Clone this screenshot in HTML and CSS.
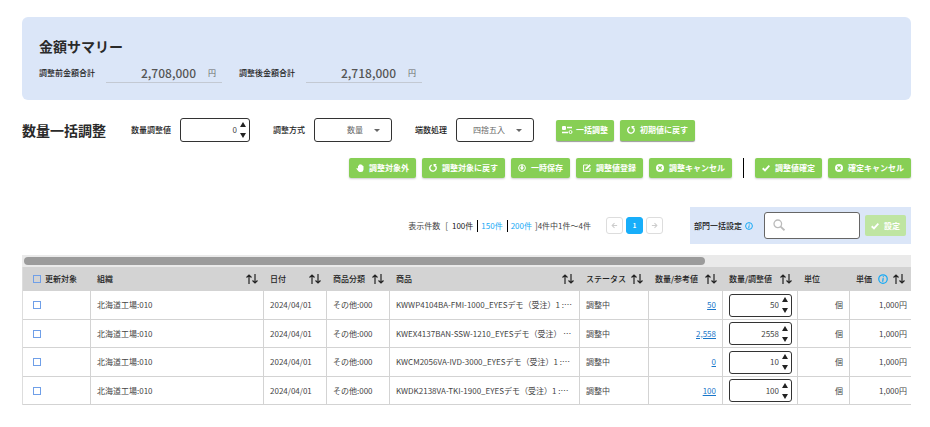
FILE: index.html
```html
<!DOCTYPE html>
<html lang="ja">
<head>
<meta charset="utf-8">
<meta name="viewport" content="width=device-width, initial-scale=1">
<title>数量一括調整</title>
<link rel="stylesheet" href="styles.css">
</head>
<body>
<svg class="sprite" aria-hidden="true">
  <symbol id="up" viewBox="0 0 6 5"><path d="M3 0L6 5H0Z"/></symbol>
  <symbol id="down" viewBox="0 0 6 5"><path d="M0 0H6L3 5Z"/></symbol>
  <symbol id="caret" viewBox="0 0 6 3"><path d="M0 0H6L3 3Z"/></symbol>
  <symbol id="sort" viewBox="0 0 12 10"><path d="M3 10V1M.5 3.500L3 1l2.500 2.500M9 0v9M6.500 6.500L9 9l2.500-2.500" fill="none" stroke="currentColor" stroke-width="1.200"/></symbol>
  <symbol id="hand" viewBox="0 0 8 8"><path d="M2 4.800V1.700Q2.500 1.100 3 1.700V.8Q3.600.2 4.200.8V.5Q4.800 0 5.400.6V1Q6 .5 6.500 1.200V2Q7.200 1.600 7.500 2.300V5.500Q7.300 8 5 8H4Q2.800 8 2.200 7L.4 4.700Q.5 3.700 1.300 4Z"/></symbol>
  <symbol id="redo" viewBox="0 0 8 8"><path d="M2.700 1.100A3.200 3.200 0 1 0 6.300 1.800" fill="none" stroke="currentColor" stroke-width="1.400"/><path d="M4.400.1H7.700L5 3.200Z"/></symbol>
  <symbol id="save" viewBox="0 0 8 8"><circle cx="4" cy="4" r="3.400" fill="none" stroke="currentColor"/><path d="M3.200 1.200H4.800V3.600H6.200L4 6.200 1.800 3.600H3.200Z"/></symbol>
  <symbol id="edit" viewBox="0 0 8 8"><path d="M5 1H.6V7.400H7V4" fill="none" stroke="currentColor"/><path d="M2.300 5.800L2.700 4 6.500.2 7.900 1.500 4 5.300Z"/></symbol>
  <symbol id="cancel" viewBox="0 0 8 8"><path fill-rule="evenodd" d="M4 0a4 4 0 1 1 0 8a4 4 0 1 1 0-8ZM2.800 1.900L1.900 2.800 3.100 4 1.900 5.200 2.800 6.100 4 4.900 5.200 6.100 6.100 5.200 4.900 4 6.100 2.800 5.200 1.900 4 3.100Z"/></symbol>
  <symbol id="check" viewBox="0 0 8 8"><path d="M.7 4.200L3 6.400 7.400 1.600" fill="none" stroke="currentColor" stroke-width="1.900"/></symbol>
  <symbol id="tune" viewBox="0 0 11 8"><path d="M5 1.500H10M0 6.500H6" fill="none" stroke="currentColor" stroke-width="1.300"/><rect width="4" height="4" rx="1"/><circle cx="8.500" cy="6" r="1.500" fill="none" stroke="currentColor"/></symbol>
  <symbol id="info" viewBox="0 0 8 8"><circle cx="4" cy="4" r="3.400" fill="none" stroke="currentColor"/><path d="M4.300 1.700V2.600M4.200 3.300L3.700 6.200" fill="none" stroke="currentColor"/></symbol>
  <symbol id="search" viewBox="0 0 12 12"><circle cx="4.800" cy="4.800" r="3.800" fill="none" stroke="currentColor" stroke-width="1.300"/><path d="M7.600 7.600L11.500 11.300" stroke="currentColor" stroke-width="1.800"/></symbol>
  <symbol id="left" viewBox="0 0 8 8"><path d="M7 4H1.500M4 1.300L1.300 4 4 6.700" fill="none" stroke="currentColor" stroke-width="1.200"/></symbol>
  <symbol id="right" viewBox="0 0 8 8"><path d="M1 4H6.500M4 1.300L6.700 4 4 6.700" fill="none" stroke="currentColor" stroke-width="1.200"/></symbol>
</svg>
<main class="page">
  <section class="summary">
    <h2 class="title">金額サマリー</h2>
    <dl class="totals">
      <div class="total"><dt class="label">調整前金額合計</dt><dd class="amount"><strong>2,708,000</strong><span>円</span></dd></div>
      <div class="total"><dt class="label">調整後金額合計</dt><dd class="amount"><strong>2,718,000</strong><span>円</span></dd></div>
    </dl>
  </section>

  <section class="adjust">
    <h2 class="title">数量一括調整</h2>
    <div class="fields">
      <div class="field">
        <label class="label" for="qty">数量調整値</label>
        <div class="stepper"><input id="qty" type="text" inputmode="numeric" value="0"><span class="steps"><button type="button" aria-label="増やす"><svg><use href="#up"/></svg></button><button type="button" aria-label="減らす"><svg><use href="#down"/></svg></button></span></div>
      </div>
      <div class="field">
        <label class="label" for="method">調整方式</label>
        <div class="picker"><select id="method"><option>数量</option></select><svg><use href="#caret"/></svg></div>
      </div>
      <div class="field">
        <label class="label" for="rounding">端数処理</label>
        <div class="picker"><select id="rounding"><option>四捨五入</option></select><svg><use href="#caret"/></svg></div>
      </div>
    </div>
    <div class="group">
      <button type="button" class="btn btn-raised btn-wide-icon"><svg><use href="#tune"/></svg>一括調整</button>
      <button type="button" class="btn btn-raised"><svg><use href="#redo"/></svg>初期値に戻す</button>
    </div>
  </section>

  <div class="actions">
    <div class="group">
      <button type="button" class="btn"><svg><use href="#hand"/></svg>調整対象外</button>
      <button type="button" class="btn"><svg><use href="#redo"/></svg>調整対象に戻す</button>
      <button type="button" class="btn"><svg><use href="#save"/></svg>一時保存</button>
      <button type="button" class="btn"><svg><use href="#edit"/></svg>調整値登録</button>
      <button type="button" class="btn"><svg><use href="#cancel"/></svg>調整キャンセル</button>
    </div>
    <div class="group group-final">
      <button type="button" class="btn"><svg><use href="#check"/></svg>調整値確定</button>
      <button type="button" class="btn"><svg><use href="#cancel"/></svg>確定キャンセル</button>
    </div>
  </div>

  <div class="listbar">
    <div class="count">
      <span>表示件数</span><span class="open">[</span>
      <ul class="sizes"><li>100件</li><li><a href="#">150件</a></li><li><a href="#">200件</a></li></ul>
      <span>]4件中1件～4件</span>
    </div>
    <nav class="pager" aria-label="ページ">
      <button type="button" aria-label="前へ"><svg><use href="#left"/></svg></button>
      <button type="button" class="current">1</button>
      <button type="button" aria-label="次へ"><svg><use href="#right"/></svg></button>
    </nav>
    <div class="dept">
      <label class="label" for="dept">部門一括設定</label>
      <svg class="info"><use href="#info"/></svg>
      <div class="search"><svg><use href="#search"/></svg><input id="dept" type="search"></div>
      <button type="button" class="btn btn-raised" disabled><svg><use href="#check"/></svg>設定</button>
    </div>
  </div>

  <div class="grid">
    <div class="track"><div class="thumb"></div></div>
    <table>
      <colgroup><col class="w-check"><col class="w-org"><col class="w-date"><col class="w-date"><col><col class="w-status"><col class="w-ref"><col class="w-qty"><col class="w-unit"><col class="w-price"></colgroup>
      <thead>
        <tr>
          <th class="pick"><label><input type="checkbox">更新対象</label></th>
          <th><div class="head">組織<svg><use href="#sort"/></svg></div></th>
          <th><div class="head">日付<svg><use href="#sort"/></svg></div></th>
          <th><div class="head">商品分類<svg><use href="#sort"/></svg></div></th>
          <th><div class="head">商品<svg><use href="#sort"/></svg></div></th>
          <th><div class="head">ステータス<svg><use href="#sort"/></svg></div></th>
          <th><div class="head">数量/参考値<svg><use href="#sort"/></svg></div></th>
          <th><div class="head">数量/調整値<svg><use href="#sort"/></svg></div></th>
          <th>単位</th>
          <th><div class="head">単価<svg class="info info-large"><use href="#info"/></svg><svg><use href="#sort"/></svg></div></th>
        </tr>
      </thead>
      <tbody>
        <tr>
          <td class="pick"><input type="checkbox" aria-label="1行目を選択"></td><td>北海道工場:010</td><td>2024/04/01</td><td>その他:000</td><td>KWWP4104BA-FMI-1000_EYESデモ（受注）1 :…</td><td>調整中</td><td class="num"><a href="#">50</a></td>
          <td class="edit"><div class="stepper"><input type="text" inputmode="numeric" aria-label="調整値" value="50"><span class="steps"><button type="button" aria-label="増やす"><svg><use href="#up"/></svg></button><button type="button" aria-label="減らす"><svg><use href="#down"/></svg></button></span></div></td>
          <td class="num">個</td><td class="num price">1,000円</td>
        </tr>
        <tr>
          <td class="pick"><input type="checkbox" aria-label="2行目を選択"></td><td>北海道工場:010</td><td>2024/04/01</td><td>その他:000</td><td>KWEX4137BAN-SSW-1210_EYESデモ（受注） …</td><td>調整中</td><td class="num"><a href="#">2,558</a></td>
          <td class="edit"><div class="stepper"><input type="text" inputmode="numeric" aria-label="調整値" value="2558"><span class="steps"><button type="button" aria-label="増やす"><svg><use href="#up"/></svg></button><button type="button" aria-label="減らす"><svg><use href="#down"/></svg></button></span></div></td>
          <td class="num">個</td><td class="num price">1,000円</td>
        </tr>
        <tr>
          <td class="pick"><input type="checkbox" aria-label="3行目を選択"></td><td>北海道工場:010</td><td>2024/04/01</td><td>その他:000</td><td>KWCM2056VA-IVD-3000_EYESデモ（受注）1 :…</td><td>調整中</td><td class="num"><a href="#">0</a></td>
          <td class="edit"><div class="stepper"><input type="text" inputmode="numeric" aria-label="調整値" value="10"><span class="steps"><button type="button" aria-label="増やす"><svg><use href="#up"/></svg></button><button type="button" aria-label="減らす"><svg><use href="#down"/></svg></button></span></div></td>
          <td class="num">個</td><td class="num price">1,000円</td>
        </tr>
        <tr>
          <td class="pick"><input type="checkbox" aria-label="4行目を選択"></td><td>北海道工場:010</td><td>2024/04/01</td><td>その他:000</td><td>KWDK2138VA-TKI-1900_EYESデモ（受注）1 :…</td><td>調整中</td><td class="num"><a href="#">100</a></td>
          <td class="edit"><div class="stepper"><input type="text" inputmode="numeric" aria-label="調整値" value="100"><span class="steps"><button type="button" aria-label="増やす"><svg><use href="#up"/></svg></button><button type="button" aria-label="減らす"><svg><use href="#down"/></svg></button></span></div></td>
          <td class="num">個</td><td class="num price">1,000円</td>
        </tr>
      </tbody>
    </table>
  </div>
</main>
</body>
</html>
```
FILE: styles.css
```css
* { box-sizing: border-box; }

body {
  margin: 0;
  background: #fff;
  color: #444;
  font: 8px/12px "Noto Sans CJK JP", sans-serif;
}

button, input, select { font: inherit; color: inherit; margin: 0; padding: 0; }
button { border: 0; background: none; cursor: pointer; }
svg { display: block; flex: none; fill: currentColor; }
.sprite { display: none; }

.page { padding: 17px 19px 20px 22px; }
.title { margin: 0; font-size: 14px; line-height: 18px; font-weight: 700; color: #2a2a2a; white-space: nowrap; }
.label { font-weight: 500; color: #222; white-space: nowrap; }

/* Summary */
.summary { padding: 20px 17px 17px; border-radius: 6px; background: #dbe6f8; }
.totals { display: flex; gap: 17px; margin: 8px 0 0; }
.total { display: flex; align-items: center; gap: 11px; }
.amount {
  display: flex;
  align-items: center;
  justify-content: flex-end;
  gap: 12px;
  width: 116px;
  height: 20px;
  margin: 0;
  padding-right: 6px;
  border-bottom: 1px solid #c3c9d3;
  color: #666;
}
.amount strong { color: #555; font-size: 12px; font-weight: 500; }

/* Adjustment controls */
.adjust { display: flex; align-items: center; margin-top: 18px; }
.fields { display: flex; gap: 23px; margin: 0 22px 0 25px; }
.field { display: flex; align-items: center; gap: 9px; }

.stepper {
  display: flex;
  align-items: center;
  width: 70px;
  height: 24px;
  padding-right: 3px;
  border: 1px solid #333;
  border-radius: 3px;
  background: #fff;
}
.stepper input { flex: 1; min-width: 0; border: 0; outline: 0; background: none; text-align: right; }
.steps { display: flex; flex-direction: column; gap: 6px; margin-left: 3px; color: #222; }
.steps svg { width: 6px; height: 5px; }

.picker { position: relative; width: 78px; }
.picker select {
  display: block;
  width: 100%;
  height: 24px;
  padding-right: 28px;
  border: 1px solid #333;
  border-radius: 3px;
  background: #fff;
  color: #666;
  appearance: none;
  text-align-last: right;
}
.picker svg { position: absolute; top: 11px; right: 12px; width: 6px; height: 3px; color: #666; pointer-events: none; }

/* Buttons */
.group { display: flex; gap: 6px; }
.btn {
  display: flex;
  align-items: center;
  gap: 5px;
  height: 20px;
  padding: 0 7px;
  border-radius: 2px;
  background: #87cf55;
  box-shadow: 0 1px 2px #ccc;
  color: #fff;
  font-weight: 700;
  white-space: nowrap;
}
.btn svg { width: 8px; height: 8px; }
.btn-raised { height: 21px; }
.adjust .btn-raised { box-shadow: 0 1px 1px #999; }
.btn-wide-icon { gap: 3px; padding: 0 6px; }
.btn-wide-icon svg { width: 11px; }
.btn:disabled { padding: 0 6px; background: #bfe5a2; box-shadow: none; }

.actions { display: flex; justify-content: flex-end; margin-top: 16px; }
.group-final { margin-left: 11px; padding-left: 11px; border-left: 1px solid #000; }

/* List toolbar */
.listbar { display: flex; align-items: center; justify-content: flex-end; margin-top: 29px; white-space: nowrap; }
.count { display: flex; align-items: center; }
.open { margin: 0 4px 0 5px; }
.sizes { display: flex; margin: 0 3px 0 0; padding: 0; list-style: none; color: #222; }
.sizes li + li { margin-left: 4px; padding-left: 3px; border-left: 1px solid #000; }
.sizes a { color: #16a9f5; text-decoration: none; }
.pager { display: flex; gap: 3px; margin: 0 27px 0 15px; }
.pager button {
  display: grid;
  place-items: center;
  width: 17px;
  height: 17px;
  border: 1px solid #ddd;
  border-radius: 3px;
  color: #ccc;
}
.pager svg { width: 7px; height: 7px; }
.pager .current { border-color: #18aefa; background: #18aefa; color: #fff; font-size: 6px; font-weight: 700; }

.dept { display: flex; align-items: center; height: 37px; padding: 0 5px 0 4px; background: #dbe6f8; }
.info { width: 8px; height: 8px; color: #16a9f5; }
.dept .info { margin: 0 11px 0 3px; }
.search {
  display: flex;
  width: 96px;
  height: 27px;
  margin-right: 5px;
  padding: 6px 8px;
  border: 1px solid #666;
  border-radius: 3px;
  background: #fff;
  color: #bbb;
}
.search svg { width: 12px; height: 12px; }
.search input { flex: 1; min-width: 0; border: 0; outline: 0; background: none; color: #444; }

/* Table */
.grid { margin-top: 11px; }
.track { padding: 2px; background: #eaeaea; height: 12px; }
.thumb { width: 77%; height: 8px; border-radius: 4px; background: #9b9b9b; }

table { width: 100%; table-layout: fixed; border-collapse: separate; border-spacing: 0; border-left: 1px solid #ddd; }
.w-check { width: 68px; }
.w-org { width: 173px; }
.w-date { width: 63px; }
.w-status { width: 69px; }
.w-ref { width: 74px; }
.w-qty { width: 75px; }
.w-unit { width: 52px; }
.w-price { width: 61px; }

th { height: 24px; padding: 0 6px; background: #d3d3d3; color: #222; font-weight: 500; text-align: left; white-space: nowrap; }
td { height: 29px; padding: 0 6px; border: solid #d3d3d3; border-width: 0 1px 1px 0; white-space: nowrap; overflow: hidden; }
tr:nth-child(even) td { height: 28px; }
td:last-child { border-right: 0; }

.head { display: flex; align-items: center; justify-content: space-between; }
.head svg { width: 12px; height: 10px; }
.head .info-large { width: 10px; }

.pick { padding-left: 10px; padding-right: 0; }
.pick label { display: flex; align-items: center; gap: 4px; }
.pick input { display: block; width: 8px; height: 8px; border: 1px solid #6f9fe8; background: #fff; appearance: none; }
th.pick input { background: none; }

.num { text-align: right; }
.num a { color: #1976c9; }
td.price { padding-right: 4px; }
td.edit { padding: 0 5px 0 6px; }
.edit .stepper { width: 100%; height: 23px; }
```
